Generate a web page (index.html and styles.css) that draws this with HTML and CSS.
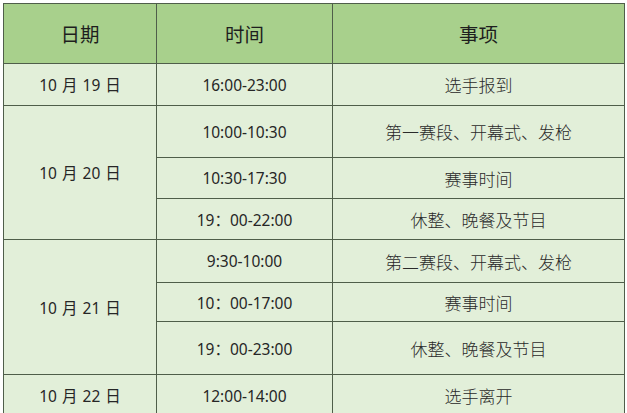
FILE: index.html
```html
<!DOCTYPE html>
<html lang="zh">
<head>
<meta charset="utf-8">
<link rel="stylesheet" href="styles.css">
</head>
<body>
<div class="wrap">
<table class="sched">
  <colgroup>
    <col class="c1"><col class="c2"><col class="c3">
  </colgroup>
  <thead>
    <tr class="h"><th>日期</th><th>时间</th><th>事项</th></tr>
  </thead>
  <tbody>
    <tr class="r42"><td>10 月 19 日</td><td>16:00-23:00</td><td class="ev">选手报到</td></tr>
    <tr class="r52"><td rowspan="3">10 月 20 日</td><td>10:00-10:30</td><td class="ev">第一赛段、开幕式、发枪</td></tr>
    <tr class="r41"><td>10:30-17:30</td><td class="ev">赛事时间</td></tr>
    <tr class="r41"><td>19：00-22:00</td><td class="ev">休整、晚餐及节目</td></tr>
    <tr class="r43"><td rowspan="3">10 月 21 日</td><td>9:30-10:00</td><td class="ev">第二赛段、开幕式、发枪</td></tr>
    <tr class="r39"><td>10：00-17:00</td><td class="ev">赛事时间</td></tr>
    <tr class="r53"><td>19：00-23:00</td><td class="ev">休整、晚餐及节目</td></tr>
    <tr class="r42"><td>10 月 22 日</td><td>12:00-14:00</td><td class="ev">选手离开</td></tr>
  </tbody>
</table>
</div>
</body>
</html>
```
FILE: styles.css
```css
html, body {
  margin: 0;
  padding: 0;
  background: #ffffff;
  overflow: hidden;
}
.wrap {
  padding: 3px 0 0 3px;
}
.sched {
  border-collapse: collapse;
  width: 621px;
  table-layout: fixed;
  font-family: "Noto Sans", "Noto Sans CJK SC", sans-serif;
  color: #262626;
}
.c1 { width: 153px; }
.c2 { width: 176px; }
.c3 { width: 292px; }
.sched th, .sched td {
  border: 1px solid #4f5e4a;
  text-align: center;
  vertical-align: middle;
  padding: 0;
}
.sched th {
  background: #a8d08c;
  font-family: "Noto Sans CJK SC", sans-serif;
  font-weight: normal;
  font-size: 19.5px;
  color: #1e1e1e;
}
.sched td {
  background: #e2efd9;
  font-size: 15.5px;
  word-spacing: 1px;
}
.sched td.ev {
  font-family: "Noto Sans CJK SC", sans-serif;
  font-weight: 300;
  font-size: 17px;
  color: #2a2a2a;
  word-spacing: 0;
}
.h { height: 60px; }
.r42 { height: 42px; }
.r52 { height: 52px; }
.r41 { height: 41px; }
.r43 { height: 43px; }
.r39 { height: 39px; }
.r53 { height: 53px; }
```
